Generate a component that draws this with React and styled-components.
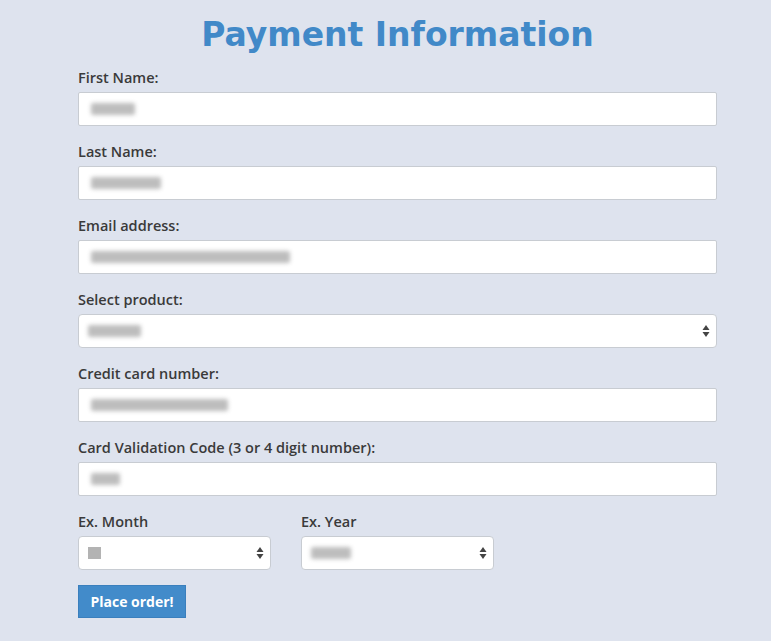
import React from 'react'
import styled, { createGlobalStyle } from 'styled-components'

const GlobalStyle = createGlobalStyle`
  html, body {
    margin: 0;
    padding: 0;
    background: #dee3ee;
  }
  body {
    font-family: "Open Sans", "Liberation Sans", sans-serif;
    color: #333;
  }
`

const fields = [
  { label: 'First Name:', blur: 44 },
  { label: 'Last Name:', blur: 70 },
  { label: 'Email address:', blur: 199 },
  { label: 'Select product:', blur: 53, select: true },
  { label: 'Credit card number:', blur: 137 },
  { label: 'Card Validation Code (3 or 4 digit number):', blur: 29 },
]

const App = () => {
  return (
    <Page>
      <GlobalStyle />
      <Title>Payment Information</Title>
      <Form>
        {fields.map((f) => (
          <Group key={f.label}>
            <Label>{f.label}</Label>
            <Field $select={f.select}>
              <Blurred $w={f.blur} />
              {f.select && <Arrows />}
            </Field>
          </Group>
        ))}
        <Row>
          <Half>
            <Label>Ex. Month</Label>
            <Field $select>
              <Solid />
              <Arrows />
            </Field>
          </Half>
          <Half>
            <Label>Ex. Year</Label>
            <Field $select>
              <Blurred $w={40} />
              <Arrows />
            </Field>
          </Half>
        </Row>
        <Button>Place order!</Button>
      </Form>
    </Page>
  )
}

// 셀렉트 화살표
const Arrows = () => (
  <ArrowWrap>
    <svg width="8" height="14" viewBox="0 0 8 14">
      <path d="M4 1 L7.5 6 L0.5 6 Z" fill="#444" />
      <path d="M4 13 L7.5 8 L0.5 8 Z" fill="#444" />
    </svg>
  </ArrowWrap>
)

const Page = styled.div`
  width: 771px;
  min-height: 641px;
  box-sizing: border-box;
  padding: 12px 54px 0 78px;
`
const Title = styled.h1`
  margin: 0 0 10px;
  text-align: center;
  font-family: "DejaVu Sans", "Open Sans", sans-serif;
  font-weight: 700;
  font-size: 33px;
  line-height: 46px;
  color: #4189c8;
`
const Form = styled.div`
  width: 639px;
  display: flex;
  flex-direction: column;
`
const Group = styled.div`
  display: flex;
  flex-direction: column;
  margin-bottom: 16px;
`
const Label = styled.label`
  font-size: 14.5px;
  font-weight: 600;
  line-height: 20px;
  color: #3a3a3a;
  margin-bottom: 4px;
`
const Field = styled.div`
  position: relative;
  height: 34px;
  box-sizing: border-box;
  background: #fff;
  border: 1px solid #c8ccd2;
  border-radius: ${(p) => (p.$select ? '4px' : '2px')};
  display: flex;
  align-items: center;
  padding-left: ${(p) => (p.$select ? '9px' : '12px')};
`
const Blurred = styled.span`
  display: block;
  width: ${(p) => p.$w}px;
  height: 12px;
  background: #bdbdbd;
  filter: blur(2px);
  border-radius: 2px;
`
const Solid = styled.span`
  display: block;
  width: 13px;
  height: 12px;
  background: #b3b3b3;
`
const ArrowWrap = styled.span`
  position: absolute;
  right: 6px;
  top: 9px;
  display: flex;
`
const Row = styled.div`
  display: flex;
  gap: 30px;
  margin-bottom: 15px;
`
const Half = styled.div`
  width: 193px;
  display: flex;
  flex-direction: column;
`
const Button = styled.button`
  align-self: flex-start;
  width: 108px;
  height: 33px;
  border: 1px solid #3a7fbd;
  border-radius: 0;
  background: #428bca;
  color: #fff;
  font-family: "Open Sans", sans-serif;
  font-weight: 700;
  font-size: 14px;
  padding: 0;
  cursor: pointer;
`

export default App
